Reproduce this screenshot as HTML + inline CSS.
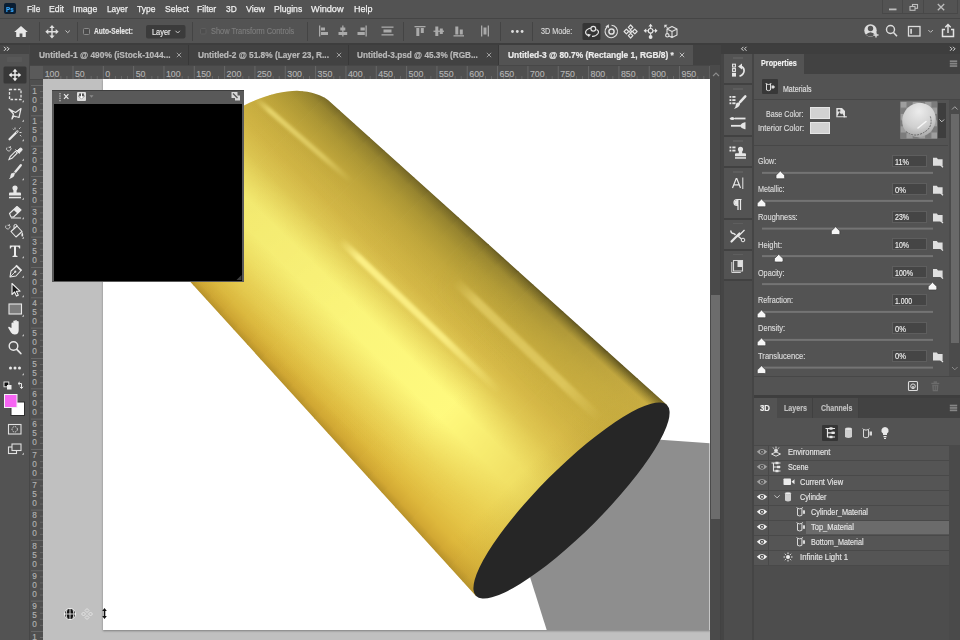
<!DOCTYPE html>
<html><head><meta charset="utf-8">
<style>
*{box-sizing:border-box;margin:0;padding:0}
html,body{width:960px;height:640px;overflow:hidden;background:#535353;font-family:"Liberation Sans",sans-serif;}
#app{position:relative;width:960px;height:640px;overflow:hidden;background:#535353;color:#dcdcdc}
.abs{position:absolute}
.t{position:absolute;white-space:nowrap;line-height:1;transform-origin:0 50%;-webkit-text-stroke:0.15px}
#canvas{left:43px;top:79px;width:667px;height:561px;background:#c0c0c0;overflow:hidden}
</style></head>
<body>
<div id="app">
<!-- menubar / options bar -->
<div class="abs" style="left:0px;top:0px;width:960px;height:18px;background:#535353;"></div>
<div class="abs" style="left:0px;top:17.5px;width:960px;height:1.5px;background:#454545;"></div>
<div class="abs" style="left:0px;top:19px;width:960px;height:24px;background:#535353;"></div>
<div class="abs" style="left:0px;top:43px;width:960px;height:2px;background:#3d3d3d;"></div>
<div class="abs" style="left:4.2px;top:3.2px;width:11.6px;height:10.8px;background:#0a1e33;border-radius:2px"></div>
<div class="t" style="left:6.2px;top:6px;font-size:8px;color:#35a9ff;font-weight:bold;transform:scaleX(0.777);">Ps</div>
<div class="t" style="-webkit-text-stroke:0.25px #f0f0f0;left:26.5px;top:4px;font-size:9.6px;color:#f0f0f0;transform:scaleX(0.857);">File</div>
<div class="t" style="-webkit-text-stroke:0.25px #f0f0f0;left:49px;top:4px;font-size:9.6px;color:#f0f0f0;transform:scaleX(0.907);">Edit</div>
<div class="t" style="-webkit-text-stroke:0.25px #f0f0f0;left:73px;top:4px;font-size:9.6px;color:#f0f0f0;transform:scaleX(0.909);">Image</div>
<div class="t" style="-webkit-text-stroke:0.25px #f0f0f0;left:107px;top:4px;font-size:9.6px;color:#f0f0f0;transform:scaleX(0.864);">Layer</div>
<div class="t" style="-webkit-text-stroke:0.25px #f0f0f0;left:137px;top:4px;font-size:9.6px;color:#f0f0f0;transform:scaleX(0.884);">Type</div>
<div class="t" style="-webkit-text-stroke:0.25px #f0f0f0;left:164.6px;top:4px;font-size:9.6px;color:#f0f0f0;transform:scaleX(0.892);">Select</div>
<div class="t" style="-webkit-text-stroke:0.25px #f0f0f0;left:197px;top:4px;font-size:9.6px;color:#f0f0f0;transform:scaleX(0.902);">Filter</div>
<div class="t" style="-webkit-text-stroke:0.25px #f0f0f0;left:225.6px;top:4px;font-size:9.6px;color:#f0f0f0;transform:scaleX(0.868);">3D</div>
<div class="t" style="-webkit-text-stroke:0.25px #f0f0f0;left:245.8px;top:4px;font-size:9.6px;color:#f0f0f0;transform:scaleX(0.921);">View</div>
<div class="t" style="-webkit-text-stroke:0.25px #f0f0f0;left:273.8px;top:4px;font-size:9.6px;color:#f0f0f0;transform:scaleX(0.896);">Plugins</div>
<div class="t" style="-webkit-text-stroke:0.25px #f0f0f0;left:311.2px;top:4px;font-size:9.6px;color:#f0f0f0;transform:scaleX(0.955);">Window</div>
<div class="t" style="-webkit-text-stroke:0.25px #f0f0f0;left:353.5px;top:4px;font-size:9.6px;color:#f0f0f0;transform:scaleX(0.937);">Help</div>
<div class="abs" style="left:882px;top:0px;width:21px;height:13.5px;background:transparent;border:1px solid #484848;border-top:0"></div>
<div class="abs" style="left:903px;top:0px;width:21px;height:13.5px;background:transparent;border:1px solid #484848;border-top:0;border-left:0"></div>
<div class="abs" style="left:924px;top:0px;width:34px;height:13.5px;background:transparent;border:1px solid #484848;border-top:0;border-left:0"></div>
<svg class="abs" style="left:882px;top:0" width="78" height="14" viewBox="882 0 78 14">
<rect x="889" y="8.500" width="7.500" height="1.800" fill="#bdbdbd"/>
<rect x="912.500" y="4.500" width="5" height="3.800" fill="none" stroke="#bdbdbd" stroke-width="1.100"/>
<rect x="910" y="6.500" width="5" height="3.800" fill="#535353" stroke="#bdbdbd" stroke-width="1.100"/>
<path d="M937.800,4 l6.400,6.200 M944.200,4 l-6.400,6.200" stroke="#bdbdbd" stroke-width="1.300"/>
</svg>
<!-- options bar -->
<svg class="abs" style="left:0;top:18px" width="960" height="26" viewBox="0 18 960 26">
<g stroke="#444" stroke-width="1"><path d="M39.500,22 v19 M77.500,22 v19 M192.500,22 v19 M307.500,22 v19 M403.500,22 v19 M500.500,22 v19 M532.500,22 v19"/></g>
<!-- home -->
<path d="M21,26 l-6.800,6 h2 v5 h3.400 v-3.400 h2.800 v3.400 h3.400 v-5 h2z" fill="#e8e8e8"/>
<!-- move -->
<g fill="#e0e0e0" stroke="none"><path d="M52,25 l2.600,3 h-1.900 v3 h3 v-1.900 l3,2.600 l-3,2.600 v-1.900 h-3 v3 h1.900 l-2.600,3 l-2.600,-3 h1.900 v-3 h-3 v1.900 l-3,-2.600 l3,-2.600 v1.900 h3 v-3 h-1.900z"/></g>
<path d="M65.500,30.500 l2.200,2.200 l2.200,-2.200" stroke="#c8c8c8" stroke-width="1" fill="none"/>
<!-- checkbox -->
<rect x="83.500" y="28.500" width="6" height="6" rx="1" fill="#4a4a4a" stroke="#8a8a8a" stroke-width="1"/>
<!-- dropdown -->
<rect x="146" y="25" width="39.500" height="13.500" rx="2" fill="#3b3b3b"/>
<path d="M175.500,30.800 l2.200,2.200 l2.200,-2.200" stroke="#c8c8c8" stroke-width="1" fill="none"/>
<!-- dim checkbox -->
<rect x="200.500" y="28.500" width="5.500" height="5.500" rx="1" fill="#4e4e4e" stroke="#5e5e5e" stroke-width="1"/>
<!-- align icons -->
<g fill="#aaa">
<rect x="319" y="25.500" width="1.300" height="11"/><rect x="321" y="27.500" width="4" height="3"/><rect x="321" y="32" width="7" height="3"/>
<rect x="342.200" y="25.500" width="1.300" height="11"/><rect x="340.300" y="27.500" width="5" height="3"/><rect x="338.500" y="32" width="8.700" height="3"/>
<rect x="365.500" y="25.500" width="1.300" height="11"/><rect x="360.500" y="27.500" width="4.300" height="3"/><rect x="357.500" y="32" width="7.300" height="3"/>
<rect x="381.500" y="26.500" width="12" height="1.300"/><rect x="383.500" y="29.500" width="8" height="3"/><rect x="381.500" y="34.200" width="12" height="1.300"/>
<rect x="414.500" y="26" width="11" height="1.300"/><rect x="416.300" y="28" width="3" height="8"/><rect x="420.800" y="28" width="3" height="5"/>
<rect x="433.500" y="30.600" width="10.500" height="1.300"/><rect x="435.300" y="26.500" width="3" height="9.500"/><rect x="439.800" y="28.500" width="3" height="5.500"/>
<rect x="453.500" y="35.200" width="10.500" height="1.300"/><rect x="455.300" y="26.500" width="3" height="8"/><rect x="459.800" y="29.500" width="3" height="5"/>
<rect x="481" y="25.500" width="1.300" height="11"/><rect x="483.500" y="27.500" width="3" height="7"/><rect x="487.700" y="25.500" width="1.300" height="11"/>
</g>
<g fill="#dedede"><circle cx="512.500" cy="31.500" r="1.400"/><circle cx="517.300" cy="31.500" r="1.400"/><circle cx="522.100" cy="31.500" r="1.400"/></g>
<!-- 3D mode icons -->
<rect x="582.500" y="23" width="18" height="17" rx="1.500" fill="#353535"/>
<g fill="none" stroke="#e4e4e4" stroke-width="1.200">
<path d="M596.500,29.500 q3,1.500 1.500,4 q-2,3 -6,2.800 M589,35.600 q-4,-1.200 -3.300,-4 q1,-2.800 5.500,-3.600"/><circle cx="593.300" cy="28.800" r="2.400" fill="#353535"/>
</g><path d="M587.300,33.800 l3.600,0.600 l-2.200,2.800z" fill="#e4e4e4"/>
<g fill="none" stroke="#e0e0e0" stroke-width="1.100">
<circle cx="611.500" cy="31.500" r="2.600" stroke-width="1.500"/><path d="M607,27 a6.200,6.200 0 1 0 4.500,-1.700"/></g><path d="M608.800,24.300 l-3.400,2.300 l3.600,1.500z" fill="#e0e0e0"/>
<g fill="none" stroke="#e4e4e4" stroke-width="1.200" stroke-linejoin="round"><path d="M630.600,25 l2.300,2.300 l-2.300,2.300 l-2.300,-2.300z M630.600,33.400 l2.300,2.300 l-2.300,2.300 l-2.300,-2.300z M624.100,31.500 l2.300,-2.300 l2.300,2.300 l-2.300,2.300z M632.500,31.500 l2.300,-2.300 l2.300,2.300 l-2.300,2.300z"/><circle cx="630.600" cy="31.500" r="1" /></g>
<g fill="#e6e6e6"><path d="M650.600,23.800 l2.200,2.600 h-4.400z M643.600,30.800 l2.600,-2.200 v4.400z M657.600,30.800 l-2.600,-2.200 v4.400z"/><circle cx="650.600" cy="37" r="1.900"/><rect x="650.100" y="26" width="1" height="2.500"/><rect x="646" y="30.300" width="2.300" height="1"/><rect x="653" y="30.300" width="2.300" height="1"/><rect x="650.100" y="33" width="1" height="2.500"/></g><circle cx="650.600" cy="30.800" r="2.300" fill="none" stroke="#e6e6e6" stroke-width="1.100"/>
<g fill="none" stroke="#e0e0e0" stroke-width="1.100" stroke-linejoin="round"><path d="M667,29 l5,-2.600 l5,2.600 v6 l-5,2.600 l-5,-2.600z M667,29 l5,2.600 l5,-2.600 M672,31.600 v6"/><circle cx="667.300" cy="35.300" r="1.700" fill="#535353"/></g><path d="M664.300,24.800 h3.200 l-3.200,3.200z" fill="#e0e0e0"/><path d="M665.500,26 l2.500,2.500" stroke="#e0e0e0" stroke-width="1"/>
<!-- right icons -->
<circle cx="870.500" cy="30.500" r="6.200" fill="#dcdcdc"/><circle cx="870.500" cy="28.500" r="2.700" fill="#535353"/><path d="M865.800,34.800 q4.700,-5 9.400,0 q-4.700,3.500 -9.400,0z" fill="#535353"/><path d="M876,32.500 v5 M873.500,35 h5" stroke="#dcdcdc" stroke-width="1.400"/>
<circle cx="890.500" cy="29.500" r="4" fill="none" stroke="#dcdcdc" stroke-width="1.400"/><path d="M893.500,32.500 l3.500,3.700" stroke="#dcdcdc" stroke-width="1.600"/>
<rect x="908.500" y="26.500" width="11.500" height="9.500" fill="none" stroke="#dcdcdc" stroke-width="1.300"/><rect x="910.300" y="28.800" width="1.600" height="5" fill="#dcdcdc"/>
<path d="M928.300,30 l2.300,2.300 l2.300,-2.300" stroke="#bdbdbd" stroke-width="1" fill="none"/>
<path d="M945,29.500 h-2.500 v7 h11 v-7 h-2.500" fill="none" stroke="#e4e4e4" stroke-width="1.500"/><path d="M948,33 v-7.500 M945.300,27.300 l2.700,-2.800 l2.700,2.800" fill="none" stroke="#e4e4e4" stroke-width="1.400"/>
</svg>
<div class="t" style="left:94px;top:27px;font-size:8.5px;color:#e6e6e6;font-weight:bold;transform:scaleX(0.779);">Auto-Select:</div>
<div class="t" style="left:151.5px;top:28px;font-size:8.8px;color:#ececec;transform:scaleX(0.840);">Layer</div>
<div class="t" style="left:210.5px;top:27px;font-size:8.6px;color:#7d7d7d;transform:scaleX(0.859);">Show Transform Controls</div>
<div class="t" style="left:540.6px;top:28px;font-size:8.2px;color:#d8d8d8;transform:scaleX(0.883);">3D Mode:</div>
<!-- doc tabs -->
<div class="abs" style="left:30px;top:45px;width:691px;height:20px;background:#424242;"></div>
<div class="abs" style="left:498.5px;top:45px;width:194px;height:20px;background:#535353;"></div>
<div class="abs" style="left:187.5px;top:45px;width:1px;height:20px;background:#383838;"></div>
<div class="abs" style="left:347.5px;top:45px;width:1px;height:20px;background:#383838;"></div>
<div class="abs" style="left:497.5px;top:45px;width:1px;height:20px;background:#383838;"></div>
<div class="t" style="-webkit-text-stroke:0.2px;left:38.7px;top:51px;font-size:8.6px;color:#b9b9b9;font-weight:bold;transform:scaleX(0.975);">Untitled-1 @ 490% (iStock-1044...</div>
<svg class="abs" style="left:175.5px;top:52.2px" width="6" height="6" viewBox="0 0 6 6"><path d="M0.800,0.800 L5.200,5.200 M5.200,0.800 L0.800,5.200" stroke="#a8a8a8" stroke-width="0.900"/></svg>
<div class="t" style="-webkit-text-stroke:0.2px;left:197.5px;top:51px;font-size:8.6px;color:#b9b9b9;font-weight:bold;transform:scaleX(0.967);">Untitled-2 @ 51.8% (Layer 23, R...</div>
<svg class="abs" style="left:336px;top:52.2px" width="6" height="6" viewBox="0 0 6 6"><path d="M0.800,0.800 L5.200,5.200 M5.200,0.800 L0.800,5.200" stroke="#a8a8a8" stroke-width="0.900"/></svg>
<div class="t" style="-webkit-text-stroke:0.2px;left:357px;top:51px;font-size:8.6px;color:#b9b9b9;font-weight:bold;transform:scaleX(0.957);">Untitled-3.psd @ 45.3% (RGB...</div>
<svg class="abs" style="left:486px;top:52.2px" width="6" height="6" viewBox="0 0 6 6"><path d="M0.800,0.800 L5.200,5.200 M5.200,0.800 L0.800,5.200" stroke="#a8a8a8" stroke-width="0.900"/></svg>
<div class="t" style="-webkit-text-stroke:0.2px;left:507.5px;top:51px;font-size:8.6px;color:#ececec;font-weight:bold;transform:scaleX(0.974);">Untitled-3 @ 80.7% (Rectangle 1, RGB/8) *</div>
<svg class="abs" style="left:678.5px;top:52.2px" width="6" height="6" viewBox="0 0 6 6"><path d="M0.800,0.800 L5.200,5.200 M5.200,0.800 L0.800,5.200" stroke="#c8c8c8" stroke-width="0.900"/></svg>
<!-- rulers -->
<div class="abs" style="left:30px;top:65px;width:680px;height:14px;background:#4f4f4f;"></div>
<div class="abs" style="left:30px;top:65px;width:13px;height:14px;background:#5a5a5a;"></div>
<div class="abs" style="left:30px;top:79px;width:13px;height:561px;background:#4f4f4f;"></div>
<svg class="abs" style="left:30px;top:65px" width="680" height="575" viewBox="30 65 680 575"><g stroke="#6e6e6e" stroke-width="0.800"><path d="M48.71,76 v3"/><path d="M54.77,76 v3"/><path d="M60.84,76 v3"/><path d="M66.9,76 v3"/><path d="M72.97,66 v13"/><path d="M79.04,76 v3"/><path d="M85.1,76 v3"/><path d="M91.17,76 v3"/><path d="M97.23,76 v3"/><path d="M103.3,66 v13"/><path d="M109.37,76 v3"/><path d="M115.43,76 v3"/><path d="M121.5,76 v3"/><path d="M127.56,76 v3"/><path d="M133.63,66 v13"/><path d="M139.7,76 v3"/><path d="M145.76,76 v3"/><path d="M151.83,76 v3"/><path d="M157.89,76 v3"/><path d="M163.96,66 v13"/><path d="M170.03,76 v3"/><path d="M176.09,76 v3"/><path d="M182.16,76 v3"/><path d="M188.22,76 v3"/><path d="M194.29,66 v13"/><path d="M200.36,76 v3"/><path d="M206.42,76 v3"/><path d="M212.49,76 v3"/><path d="M218.55,76 v3"/><path d="M224.62,66 v13"/><path d="M230.69,76 v3"/><path d="M236.75,76 v3"/><path d="M242.82,76 v3"/><path d="M248.88,76 v3"/><path d="M254.95,66 v13"/><path d="M261.02,76 v3"/><path d="M267.08,76 v3"/><path d="M273.15,76 v3"/><path d="M279.21,76 v3"/><path d="M285.28,66 v13"/><path d="M291.35,76 v3"/><path d="M297.41,76 v3"/><path d="M303.48,76 v3"/><path d="M309.54,76 v3"/><path d="M315.61,66 v13"/><path d="M321.68,76 v3"/><path d="M327.74,76 v3"/><path d="M333.81,76 v3"/><path d="M339.87,76 v3"/><path d="M345.94,66 v13"/><path d="M352.01,76 v3"/><path d="M358.07,76 v3"/><path d="M364.14,76 v3"/><path d="M370.2,76 v3"/><path d="M376.27,66 v13"/><path d="M382.34,76 v3"/><path d="M388.4,76 v3"/><path d="M394.47,76 v3"/><path d="M400.53,76 v3"/><path d="M406.6,66 v13"/><path d="M412.67,76 v3"/><path d="M418.73,76 v3"/><path d="M424.8,76 v3"/><path d="M430.86,76 v3"/><path d="M436.93,66 v13"/><path d="M443,76 v3"/><path d="M449.06,76 v3"/><path d="M455.13,76 v3"/><path d="M461.19,76 v3"/><path d="M467.26,66 v13"/><path d="M473.33,76 v3"/><path d="M479.39,76 v3"/><path d="M485.46,76 v3"/><path d="M491.52,76 v3"/><path d="M497.59,66 v13"/><path d="M503.66,76 v3"/><path d="M509.72,76 v3"/><path d="M515.79,76 v3"/><path d="M521.85,76 v3"/><path d="M527.92,66 v13"/><path d="M533.99,76 v3"/><path d="M540.05,76 v3"/><path d="M546.12,76 v3"/><path d="M552.18,76 v3"/><path d="M558.25,66 v13"/><path d="M564.32,76 v3"/><path d="M570.38,76 v3"/><path d="M576.45,76 v3"/><path d="M582.51,76 v3"/><path d="M588.58,66 v13"/><path d="M594.65,76 v3"/><path d="M600.71,76 v3"/><path d="M606.78,76 v3"/><path d="M612.84,76 v3"/><path d="M618.91,66 v13"/><path d="M624.98,76 v3"/><path d="M631.04,76 v3"/><path d="M637.11,76 v3"/><path d="M643.17,76 v3"/><path d="M649.24,66 v13"/><path d="M655.31,76 v3"/><path d="M661.37,76 v3"/><path d="M667.44,76 v3"/><path d="M673.5,76 v3"/><path d="M679.57,66 v13"/><path d="M685.64,76 v3"/><path d="M691.7,76 v3"/><path d="M697.77,76 v3"/><path d="M703.83,76 v3"/><path d="M709.9,66 v13"/><path d="M40,79.43 h3"/><path d="M31,85.5 h12"/><path d="M40,91.57 h3"/><path d="M40,97.63 h3"/><path d="M40,103.7 h3"/><path d="M40,109.76 h3"/><path d="M31,115.83 h12"/><path d="M40,121.9 h3"/><path d="M40,127.96 h3"/><path d="M40,134.03 h3"/><path d="M40,140.09 h3"/><path d="M31,146.16 h12"/><path d="M40,152.23 h3"/><path d="M40,158.29 h3"/><path d="M40,164.36 h3"/><path d="M40,170.42 h3"/><path d="M31,176.49 h12"/><path d="M40,182.56 h3"/><path d="M40,188.62 h3"/><path d="M40,194.69 h3"/><path d="M40,200.75 h3"/><path d="M31,206.82 h12"/><path d="M40,212.89 h3"/><path d="M40,218.95 h3"/><path d="M40,225.02 h3"/><path d="M40,231.08 h3"/><path d="M31,237.15 h12"/><path d="M40,243.22 h3"/><path d="M40,249.28 h3"/><path d="M40,255.35 h3"/><path d="M40,261.41 h3"/><path d="M31,267.48 h12"/><path d="M40,273.55 h3"/><path d="M40,279.61 h3"/><path d="M40,285.68 h3"/><path d="M40,291.74 h3"/><path d="M31,297.81 h12"/><path d="M40,303.88 h3"/><path d="M40,309.94 h3"/><path d="M40,316.01 h3"/><path d="M40,322.07 h3"/><path d="M31,328.14 h12"/><path d="M40,334.21 h3"/><path d="M40,340.27 h3"/><path d="M40,346.34 h3"/><path d="M40,352.4 h3"/><path d="M31,358.47 h12"/><path d="M40,364.54 h3"/><path d="M40,370.6 h3"/><path d="M40,376.67 h3"/><path d="M40,382.73 h3"/><path d="M31,388.8 h12"/><path d="M40,394.87 h3"/><path d="M40,400.93 h3"/><path d="M40,407 h3"/><path d="M40,413.06 h3"/><path d="M31,419.13 h12"/><path d="M40,425.2 h3"/><path d="M40,431.26 h3"/><path d="M40,437.33 h3"/><path d="M40,443.39 h3"/><path d="M31,449.46 h12"/><path d="M40,455.53 h3"/><path d="M40,461.59 h3"/><path d="M40,467.66 h3"/><path d="M40,473.72 h3"/><path d="M31,479.79 h12"/><path d="M40,485.86 h3"/><path d="M40,491.92 h3"/><path d="M40,497.99 h3"/><path d="M40,504.05 h3"/><path d="M31,510.12 h12"/><path d="M40,516.19 h3"/><path d="M40,522.25 h3"/><path d="M40,528.32 h3"/><path d="M40,534.38 h3"/><path d="M31,540.45 h12"/><path d="M40,546.52 h3"/><path d="M40,552.58 h3"/><path d="M40,558.65 h3"/><path d="M40,564.71 h3"/><path d="M31,570.78 h12"/><path d="M40,576.85 h3"/><path d="M40,582.91 h3"/><path d="M40,588.98 h3"/><path d="M40,595.04 h3"/><path d="M31,601.11 h12"/><path d="M40,607.18 h3"/><path d="M40,613.24 h3"/><path d="M40,619.31 h3"/><path d="M40,625.37 h3"/><path d="M31,631.44 h12"/><path d="M40,637.51 h3"/></g></svg>
<div class="t" style="left:44.64px;top:70px;font-size:8.8px;color:#b2b2b2;">100</div>
<div class="t" style="left:74.97px;top:70px;font-size:8.8px;color:#b2b2b2;">50</div>
<div class="t" style="left:105.3px;top:70px;font-size:8.8px;color:#b2b2b2;">0</div>
<div class="t" style="left:135.63px;top:70px;font-size:8.8px;color:#b2b2b2;">50</div>
<div class="t" style="left:165.96px;top:70px;font-size:8.8px;color:#b2b2b2;">100</div>
<div class="t" style="left:196.29px;top:70px;font-size:8.8px;color:#b2b2b2;">150</div>
<div class="t" style="left:226.62px;top:70px;font-size:8.8px;color:#b2b2b2;">200</div>
<div class="t" style="left:256.95px;top:70px;font-size:8.8px;color:#b2b2b2;">250</div>
<div class="t" style="left:287.28px;top:70px;font-size:8.8px;color:#b2b2b2;">300</div>
<div class="t" style="left:317.61px;top:70px;font-size:8.8px;color:#b2b2b2;">350</div>
<div class="t" style="left:347.94px;top:70px;font-size:8.8px;color:#b2b2b2;">400</div>
<div class="t" style="left:378.27px;top:70px;font-size:8.8px;color:#b2b2b2;">450</div>
<div class="t" style="left:408.6px;top:70px;font-size:8.8px;color:#b2b2b2;">500</div>
<div class="t" style="left:438.93px;top:70px;font-size:8.8px;color:#b2b2b2;">550</div>
<div class="t" style="left:469.26px;top:70px;font-size:8.8px;color:#b2b2b2;">600</div>
<div class="t" style="left:499.59px;top:70px;font-size:8.8px;color:#b2b2b2;">650</div>
<div class="t" style="left:529.92px;top:70px;font-size:8.8px;color:#b2b2b2;">700</div>
<div class="t" style="left:560.25px;top:70px;font-size:8.8px;color:#b2b2b2;">750</div>
<div class="t" style="left:590.58px;top:70px;font-size:8.8px;color:#b2b2b2;">800</div>
<div class="t" style="left:620.91px;top:70px;font-size:8.8px;color:#b2b2b2;">850</div>
<div class="t" style="left:651.24px;top:70px;font-size:8.8px;color:#b2b2b2;">900</div>
<div class="t" style="left:681.57px;top:70px;font-size:8.8px;color:#b2b2b2;">950</div>
<div class="t" style="left:32.2px;top:88px;font-size:8.2px;color:#b2b2b2;">1</div>
<div class="t" style="left:32.2px;top:97px;font-size:8.2px;color:#b2b2b2;">0</div>
<div class="t" style="left:32.2px;top:106px;font-size:8.2px;color:#b2b2b2;">0</div>
<div class="t" style="left:32.2px;top:118px;font-size:8.2px;color:#b2b2b2;">1</div>
<div class="t" style="left:32.2px;top:127px;font-size:8.2px;color:#b2b2b2;">5</div>
<div class="t" style="left:32.2px;top:136px;font-size:8.2px;color:#b2b2b2;">0</div>
<div class="t" style="left:32.2px;top:148px;font-size:8.2px;color:#b2b2b2;">2</div>
<div class="t" style="left:32.2px;top:157px;font-size:8.2px;color:#b2b2b2;">0</div>
<div class="t" style="left:32.2px;top:166px;font-size:8.2px;color:#b2b2b2;">0</div>
<div class="t" style="left:32.2px;top:179px;font-size:8.2px;color:#b2b2b2;">2</div>
<div class="t" style="left:32.2px;top:188px;font-size:8.2px;color:#b2b2b2;">5</div>
<div class="t" style="left:32.2px;top:197px;font-size:8.2px;color:#b2b2b2;">0</div>
<div class="t" style="left:32.2px;top:209px;font-size:8.2px;color:#b2b2b2;">3</div>
<div class="t" style="left:32.2px;top:218px;font-size:8.2px;color:#b2b2b2;">0</div>
<div class="t" style="left:32.2px;top:227px;font-size:8.2px;color:#b2b2b2;">0</div>
<div class="t" style="left:32.2px;top:239px;font-size:8.2px;color:#b2b2b2;">3</div>
<div class="t" style="left:32.2px;top:248px;font-size:8.2px;color:#b2b2b2;">5</div>
<div class="t" style="left:32.2px;top:257px;font-size:8.2px;color:#b2b2b2;">0</div>
<div class="t" style="left:32.2px;top:270px;font-size:8.2px;color:#b2b2b2;">4</div>
<div class="t" style="left:32.2px;top:279px;font-size:8.2px;color:#b2b2b2;">0</div>
<div class="t" style="left:32.2px;top:288px;font-size:8.2px;color:#b2b2b2;">0</div>
<div class="t" style="left:32.2px;top:300px;font-size:8.2px;color:#b2b2b2;">4</div>
<div class="t" style="left:32.2px;top:309px;font-size:8.2px;color:#b2b2b2;">5</div>
<div class="t" style="left:32.2px;top:318px;font-size:8.2px;color:#b2b2b2;">0</div>
<div class="t" style="left:32.2px;top:330px;font-size:8.2px;color:#b2b2b2;">5</div>
<div class="t" style="left:32.2px;top:339px;font-size:8.2px;color:#b2b2b2;">0</div>
<div class="t" style="left:32.2px;top:348px;font-size:8.2px;color:#b2b2b2;">0</div>
<div class="t" style="left:32.2px;top:361px;font-size:8.2px;color:#b2b2b2;">5</div>
<div class="t" style="left:32.2px;top:370px;font-size:8.2px;color:#b2b2b2;">5</div>
<div class="t" style="left:32.2px;top:379px;font-size:8.2px;color:#b2b2b2;">0</div>
<div class="t" style="left:32.2px;top:391px;font-size:8.2px;color:#b2b2b2;">6</div>
<div class="t" style="left:32.2px;top:400px;font-size:8.2px;color:#b2b2b2;">0</div>
<div class="t" style="left:32.2px;top:409px;font-size:8.2px;color:#b2b2b2;">0</div>
<div class="t" style="left:32.2px;top:421px;font-size:8.2px;color:#b2b2b2;">6</div>
<div class="t" style="left:32.2px;top:430px;font-size:8.2px;color:#b2b2b2;">5</div>
<div class="t" style="left:32.2px;top:439px;font-size:8.2px;color:#b2b2b2;">0</div>
<div class="t" style="left:32.2px;top:452px;font-size:8.2px;color:#b2b2b2;">7</div>
<div class="t" style="left:32.2px;top:461px;font-size:8.2px;color:#b2b2b2;">0</div>
<div class="t" style="left:32.2px;top:470px;font-size:8.2px;color:#b2b2b2;">0</div>
<div class="t" style="left:32.2px;top:482px;font-size:8.2px;color:#b2b2b2;">7</div>
<div class="t" style="left:32.2px;top:491px;font-size:8.2px;color:#b2b2b2;">5</div>
<div class="t" style="left:32.2px;top:500px;font-size:8.2px;color:#b2b2b2;">0</div>
<div class="t" style="left:32.2px;top:512px;font-size:8.2px;color:#b2b2b2;">8</div>
<div class="t" style="left:32.2px;top:521px;font-size:8.2px;color:#b2b2b2;">0</div>
<div class="t" style="left:32.2px;top:530px;font-size:8.2px;color:#b2b2b2;">0</div>
<div class="t" style="left:32.2px;top:543px;font-size:8.2px;color:#b2b2b2;">8</div>
<div class="t" style="left:32.2px;top:552px;font-size:8.2px;color:#b2b2b2;">5</div>
<div class="t" style="left:32.2px;top:561px;font-size:8.2px;color:#b2b2b2;">0</div>
<div class="t" style="left:32.2px;top:573px;font-size:8.2px;color:#b2b2b2;">9</div>
<div class="t" style="left:32.2px;top:582px;font-size:8.2px;color:#b2b2b2;">0</div>
<div class="t" style="left:32.2px;top:591px;font-size:8.2px;color:#b2b2b2;">0</div>
<div class="t" style="left:32.2px;top:603px;font-size:8.2px;color:#b2b2b2;">9</div>
<div class="t" style="left:32.2px;top:612px;font-size:8.2px;color:#b2b2b2;">5</div>
<div class="t" style="left:32.2px;top:621px;font-size:8.2px;color:#b2b2b2;">0</div>
<div class="t" style="left:32.2px;top:634px;font-size:8.2px;color:#b2b2b2;">1</div>
<div class="abs" style="left:30px;top:64.5px;width:691px;height:0.8px;background:#474747;"></div>
<div class="abs" style="left:42.6px;top:79px;width:0.8px;height:561px;background:#474747;"></div>
<div class="abs" style="left:30px;top:78.6px;width:680px;height:0.8px;background:#474747;"></div>
<!-- canvas -->
<div id="canvas" class="abs">
<div class="abs" style="left:60px;top:0;width:607px;height:551px;background:#fff;box-shadow:0 1px 2px rgba(0,0,0,.35)"></div>
<svg class="abs" style="left:0;top:0" width="667" height="561" viewBox="43 79 667 561">
<defs>
<clipPath id="cv"><rect x="103" y="79" width="606.500" height="551"/></clipPath>
<clipPath id="body"><path d="M667,405 L328,99.900 C322,95.500 312,91.500 297,90.800 C282,90.800 262,96 243,106 L40,106 L40,117 L190,281.500 L476,596 Z"/></clipPath>
<linearGradient id="gold" gradientUnits="userSpaceOnUse" x1="667" y1="405" x2="476" y2="596">
<stop offset="0" stop-color="#5e5320"/><stop offset="0.015" stop-color="#776927"/><stop offset="0.05" stop-color="#96842f"/><stop offset="0.11" stop-color="#ae9835"/><stop offset="0.19" stop-color="#c2a83c"/><stop offset="0.27" stop-color="#ceb242"/><stop offset="0.35" stop-color="#d6b846"/><stop offset="0.45" stop-color="#dcc04a"/><stop offset="0.6" stop-color="#e4c84e"/><stop offset="0.75" stop-color="#e6c84a"/><stop offset="0.85" stop-color="#e4c244"/><stop offset="0.92" stop-color="#deb83c"/><stop offset="0.97" stop-color="#d2a833"/><stop offset="1" stop-color="#b8922a"/>
</linearGradient>
<linearGradient id="g0" href="#gold" x1="659.56" y1="398.3" x2="469.3" y2="588.56"/><linearGradient id="g1" href="#gold" x1="644.76" y1="384.81" x2="455.81" y2="573.76"/><linearGradient id="g2" href="#gold" x1="629.96" y1="371.33" x2="442.33" y2="558.96"/><linearGradient id="g3" href="#gold" x1="615.16" y1="357.84" x2="428.84" y2="544.16"/><linearGradient id="g4" href="#gold" x1="600.36" y1="344.36" x2="415.36" y2="529.36"/><linearGradient id="g5" href="#gold" x1="585.56" y1="330.88" x2="401.88" y2="514.56"/><linearGradient id="g6" href="#gold" x1="570.76" y1="317.39" x2="388.39" y2="499.76"/><linearGradient id="g7" href="#gold" x1="555.96" y1="303.91" x2="374.91" y2="484.96"/><linearGradient id="g8" href="#gold" x1="541.16" y1="290.42" x2="361.42" y2="470.16"/><linearGradient id="g9" href="#gold" x1="526.36" y1="276.94" x2="347.94" y2="455.36"/><linearGradient id="g10" href="#gold" x1="511.56" y1="263.45" x2="334.45" y2="440.56"/><linearGradient id="g11" href="#gold" x1="496.76" y1="249.97" x2="320.97" y2="425.76"/><linearGradient id="g12" href="#gold" x1="481.96" y1="236.48" x2="307.48" y2="410.96"/><linearGradient id="g13" href="#gold" x1="467.16" y1="223" x2="294" y2="396.16"/><linearGradient id="g14" href="#gold" x1="452.36" y1="209.51" x2="280.51" y2="381.36"/><linearGradient id="g15" href="#gold" x1="437.56" y1="196.03" x2="267.03" y2="366.56"/><linearGradient id="g16" href="#gold" x1="422.76" y1="182.55" x2="253.55" y2="351.76"/><linearGradient id="g17" href="#gold" x1="407.96" y1="169.06" x2="240.06" y2="336.96"/><linearGradient id="g18" href="#gold" x1="393.16" y1="155.58" x2="226.58" y2="322.16"/><linearGradient id="g19" href="#gold" x1="378.36" y1="142.09" x2="213.09" y2="307.36"/><linearGradient id="g20" href="#gold" x1="363.56" y1="128.61" x2="199.61" y2="292.56"/><linearGradient id="g21" href="#gold" x1="348.76" y1="115.12" x2="186.12" y2="277.76"/><linearGradient id="g22" href="#gold" x1="333.97" y1="101.64" x2="172.64" y2="262.97"/><linearGradient id="g23" href="#gold" x1="319.17" y1="88.15" x2="159.15" y2="248.17"/><linearGradient id="g24" href="#gold" x1="304.37" y1="74.67" x2="145.67" y2="233.37"/><linearGradient id="g25" href="#gold" x1="289.57" y1="61.19" x2="132.19" y2="218.57"/><linearGradient id="g26" href="#gold" x1="274.77" y1="47.7" x2="118.7" y2="203.77"/><linearGradient id="g27" href="#gold" x1="259.97" y1="34.22" x2="105.22" y2="188.97"/>
<linearGradient id="band" gradientUnits="userSpaceOnUse" x1="414.68" y1="252.23" x2="291.32" y2="377.77"><stop offset="0" stop-color="#fffa7e" stop-opacity="0"/><stop offset="0.14" stop-color="#fffa7e" stop-opacity="0.04"/><stop offset="0.26" stop-color="#fffa7e" stop-opacity="0.25"/><stop offset="0.36" stop-color="#fffa7e" stop-opacity="0.65"/><stop offset="0.45" stop-color="#fffa7e" stop-opacity="1"/><stop offset="0.57" stop-color="#fffa7e" stop-opacity="1"/><stop offset="0.67" stop-color="#fffa7e" stop-opacity="0.7"/><stop offset="0.78" stop-color="#fffa7e" stop-opacity="0.35"/><stop offset="0.9" stop-color="#fffa7e" stop-opacity="0.1"/><stop offset="1" stop-color="#fffa7e" stop-opacity="0"/></linearGradient>
<linearGradient id="bandm" gradientUnits="userSpaceOnUse" x1="159.4" y1="124.89" x2="558.85" y2="517.4"><stop offset="0" stop-color="rgb(191,191,191)"/><stop offset="0.2" stop-color="rgb(216,216,216)"/><stop offset="0.5" stop-color="rgb(255,255,255)"/><stop offset="0.72" stop-color="rgb(255,255,255)"/><stop offset="0.82" stop-color="rgb(178,178,178)"/><stop offset="0.92" stop-color="rgb(102,102,102)"/><stop offset="1" stop-color="rgb(63,63,63)"/></linearGradient>
<mask id="bm" maskUnits="userSpaceOnUse" x="43" y="79" width="667" height="561"><rect x="43" y="79" width="667" height="561" fill="url(#bandm)"/></mask>
<linearGradient id="far" gradientUnits="userSpaceOnUse" x1="250" y1="180" x2="571" y2="500">
<stop offset="0" stop-color="#a08c30" stop-opacity="0.10"/><stop offset="0.5" stop-color="#a08c30" stop-opacity="0.03"/><stop offset="0.7" stop-color="#a08c30" stop-opacity="0"/>
<stop offset="0.88" stop-color="#b09432" stop-opacity="0"/><stop offset="1" stop-color="#b09432" stop-opacity="0.30"/>
</linearGradient>
<linearGradient id="stA" gradientUnits="userSpaceOnUse" x1="255" y1="98" x2="352" y2="182">
<stop offset="0" stop-color="#f2e27a" stop-opacity="0"/><stop offset="0.15" stop-color="#f2e27a" stop-opacity="0.75"/><stop offset="0.7" stop-color="#f2e27a" stop-opacity="0.55"/><stop offset="1" stop-color="#f2e27a" stop-opacity="0"/>
</linearGradient>
<linearGradient id="stB" gradientUnits="userSpaceOnUse" x1="455" y1="281" x2="600" y2="419">
<stop offset="0" stop-color="#ecd870" stop-opacity="0"/><stop offset="0.15" stop-color="#ecd870" stop-opacity="0.6"/><stop offset="0.75" stop-color="#ecd870" stop-opacity="0.55"/><stop offset="1" stop-color="#ecd870" stop-opacity="0"/>
</linearGradient>
<linearGradient id="stM" gradientUnits="userSpaceOnUse" x1="340" y1="240" x2="500" y2="392">
<stop offset="0" stop-color="#fff48a" stop-opacity="0"/><stop offset="0.12" stop-color="#fff48a" stop-opacity="0.9"/><stop offset="0.65" stop-color="#fff48a" stop-opacity="0.8"/><stop offset="1" stop-color="#fff48a" stop-opacity="0"/>
</linearGradient>
<linearGradient id="nl" gradientUnits="userSpaceOnUse" x1="667" y1="405" x2="613.500" y2="464.500">
<stop offset="0" stop-color="#d8ba48" stop-opacity="0"/><stop offset="0.05" stop-color="#d8ba48" stop-opacity="0.1"/><stop offset="0.16" stop-color="#d8ba48" stop-opacity="0.8"/><stop offset="0.45" stop-color="#d8ba48" stop-opacity="0.6"/><stop offset="1" stop-color="#d8ba48" stop-opacity="0"/>
</linearGradient>
<linearGradient id="nlm" gradientUnits="userSpaceOnUse" x1="667" y1="405" x2="474" y2="231">
<stop offset="0" stop-color="#fff"/><stop offset="0.25" stop-color="#ccc"/><stop offset="0.6" stop-color="#555"/><stop offset="1" stop-color="#000"/>
</linearGradient>
<mask id="nm" maskUnits="userSpaceOnUse" x="43" y="79" width="667" height="561"><rect x="43" y="79" width="667" height="561" fill="url(#nlm)"/></mask>
<filter id="bl" x="-20%" y="-20%" width="140%" height="140%"><feGaussianBlur stdDeviation="1.600"/></filter>
</defs>
<g clip-path="url(#cv)">
<polygon points="660.400,439.800 710,443.200 710,631 547,631 530,577" fill="#8e8e8e"/>
<g clip-path="url(#body)">
<polygon points="755.35,373.22 712.92,330.79 401.79,641.92 444.22,684.35" fill="url(#g0)"/><polygon points="713.42,331.29 698.78,316.65 387.65,627.78 402.29,642.42" fill="url(#g1)"/><polygon points="699.27,317.15 684.64,302.51 373.51,613.64 388.15,628.27" fill="url(#g2)"/><polygon points="685.13,303.01 670.49,288.37 359.37,599.49 374.01,614.13" fill="url(#g3)"/><polygon points="670.99,288.86 656.35,274.23 345.23,585.35 359.86,599.99" fill="url(#g4)"/><polygon points="656.85,274.72 642.21,260.08 331.08,571.21 345.72,585.85" fill="url(#g5)"/><polygon points="642.71,260.58 628.07,245.94 316.94,557.07 331.58,571.71" fill="url(#g6)"/><polygon points="628.56,246.44 613.93,231.8 302.8,542.93 317.44,557.56" fill="url(#g7)"/><polygon points="614.42,232.29 599.78,217.66 288.66,528.78 303.29,543.42" fill="url(#g8)"/><polygon points="600.28,218.15 585.64,203.52 274.52,514.64 289.15,529.28" fill="url(#g9)"/><polygon points="586.14,204.01 571.5,189.37 260.37,500.5 275.01,515.14" fill="url(#g10)"/><polygon points="571.99,189.87 557.36,175.23 246.23,486.36 260.87,500.99" fill="url(#g11)"/><polygon points="557.85,175.73 543.22,161.09 232.09,472.22 246.73,486.85" fill="url(#g12)"/><polygon points="543.71,161.58 529.07,146.95 217.95,458.07 232.58,472.71" fill="url(#g13)"/><polygon points="529.57,147.44 514.93,132.8 203.8,443.93 218.44,458.57" fill="url(#g14)"/><polygon points="515.43,133.3 500.79,118.66 189.66,429.79 204.3,444.43" fill="url(#g15)"/><polygon points="501.28,119.16 486.65,104.52 175.52,415.65 190.16,430.28" fill="url(#g16)"/><polygon points="487.14,105.02 472.51,90.38 161.38,401.51 176.02,416.14" fill="url(#g17)"/><polygon points="473,90.87 458.36,76.24 147.24,387.36 161.87,402" fill="url(#g18)"/><polygon points="458.86,76.73 444.22,62.09 133.09,373.22 147.73,387.86" fill="url(#g19)"/><polygon points="444.72,62.59 430.08,47.95 118.95,359.08 133.59,373.72" fill="url(#g20)"/><polygon points="430.57,48.45 415.94,33.81 104.81,344.94 119.45,359.57" fill="url(#g21)"/><polygon points="416.43,34.3 401.79,19.67 90.67,330.79 105.3,345.43" fill="url(#g22)"/><polygon points="402.29,20.16 387.65,5.53 76.53,316.65 91.16,331.29" fill="url(#g23)"/><polygon points="388.15,6.02 373.51,-8.62 62.38,302.51 77.02,317.15" fill="url(#g24)"/><polygon points="374.01,-8.12 359.37,-22.76 48.24,288.37 62.88,303.01" fill="url(#g25)"/><polygon points="359.86,-22.26 345.23,-36.9 34.1,274.23 48.74,288.86" fill="url(#g26)"/><polygon points="345.72,-36.41 189.66,-192.46 -121.46,118.66 34.59,274.72" fill="url(#g27)"/>
<rect x="103" y="79" width="607" height="551" fill="url(#band)" mask="url(#bm)"/>
<rect x="103" y="79" width="607" height="551" fill="url(#far)"/>
<rect x="103" y="79" width="607" height="551" fill="url(#nl)" mask="url(#nm)"/>
<g filter="url(#bl)">
<path d="M255,98 L352,182" stroke="url(#stA)" stroke-width="5" fill="none"/>
<path d="M455,281 L600,419" stroke="url(#stB)" stroke-width="9" fill="none"/>
<path d="M340,240 L500,392" stroke="url(#stM)" stroke-width="7" fill="none"/>
</g>
</g>
<ellipse cx="571.500" cy="500.500" rx="135" ry="32" transform="rotate(-45 571.500 500.500)" fill="#262626"/>
</g>
</svg>
<!--FLOATPANEL-->
<div class="abs" style="left:9px;top:11px;width:192px;height:192px;background:#595959;border-top:1px solid #3e3e3e"></div>
<div class="abs" style="left:11px;top:25px;width:188px;height:177px;background:#000"></div>
<svg class="abs" style="left:9px;top:11px" width="192" height="192" viewBox="52 90 192 192">
<g fill="#9a9a9a"><rect x="59" y="93" width="2" height="1.4"/><rect x="59" y="95.3" width="2" height="1.4"/><rect x="59" y="97.6" width="2" height="1.4"/><rect x="59" y="99.9" width="2" height="1.4"/></g>
<path d="M64,94.2 L68.4,98.8 M68.4,94.2 L64,98.8" stroke="#f0f0f0" stroke-width="1.100" fill="none"/>
<rect x="77" y="92" width="9" height="9" rx="1" fill="#dcdcdc"/>
<path d="M79.2,93.5 h4.6 v2.3 h1.3 l-3.6,3.4 l-3.6,-3.4 h1.3z" fill="#444"/>
<path d="M81.5,93.2 v4.8 M79.6,96.2 l1.9,2 l1.9,-2" stroke="#fff" stroke-width="1.1" fill="none"/>
<path d="M89.5,95.3 h4 l-2,2.4z" fill="#8a8a8a"/>
<rect x="231.5" y="92" width="6" height="6" fill="#d8d8d8"/><rect x="235" y="95.5" width="5" height="5" fill="#d8d8d8"/>
<path d="M233,93.5 l4.5,4.5" stroke="#555" stroke-width="1.2"/>
<path d="M241.5,275 l-5,5 h5z" fill="#3c3c3c"/>
</svg>
<!--NAVICONS-->
<svg class="abs" style="left:17px;top:525px" width="60" height="20" viewBox="60 604 60 20">
<circle cx="70" cy="614" r="5.6" fill="#111" stroke="#eee" stroke-width="1"/>
<path d="M64.5,614 h11 M70,608.5 v11 M67,609.5 q-2,4.5 0,9 M73,609.5 q2,4.5 0,9" stroke="#eee" stroke-width="0.9" fill="none"/>
<g fill="none" stroke="#e4e4e4" stroke-width="1"><path d="M87,608.5 l2,2 l-2,2 l-2,-2z M87,615.5 l2,2 l-2,2 l-2,-2z M81.500,614 l2,-2 l2,2 l-2,2z M88.500,614 l2,-2 l2,2 l-2,2z"/></g>
<path d="M104.5,608 l2.300,3 h-1.500 v5 h1.500 l-2.300,3 l-2.300,-3 h1.500 v-5 h-1.500z" fill="#111"/>
</svg>
</div>
<!-- vscroll -->
<div class="abs" style="left:709.5px;top:65px;width:12px;height:575px;background:#4a4a4a;"></div>
<div class="abs" style="left:720.3px;top:65px;width:1.5px;height:575px;background:#424242;"></div>
<div class="abs" style="left:710.6px;top:295px;width:9.4px;height:224px;background:#6c6c6c;"></div>
<svg class="abs" style="left:710px;top:69px" width="12" height="10" viewBox="0 0 12 10"><path d="M3,7 l3,-3 l3,3" stroke="#8c8c8c" stroke-width="1.100" fill="none"/></svg>
<!-- toolbar -->
<div class="abs" style="left:0px;top:45px;width:30px;height:595px;background:#535353;"></div>
<div class="abs" style="left:0px;top:45px;width:29.3px;height:8.5px;background:#454545;"></div>
<div class="abs" style="left:7px;top:56.5px;width:15px;height:5.5px;background:#585858;border-radius:1px"></div>
<div class="abs" style="left:29.3px;top:45px;width:0.8px;height:595px;background:#474747;"></div>
<svg class="abs" style="left:0;top:45px" width="30" height="595" viewBox="0 45 30 595">
<path d="M4,46.800 l2,2 l-2,2 M7,46.800 l2,2 l-2,2" stroke="#e8e8e8" stroke-width="1" fill="none"/>
<rect x="3.500" y="66.500" width="23" height="17" rx="1.500" fill="#383838"/>
<!-- move -->
<path d="M15,68.800 l2.500,2.900 h-1.800 v2.600 h2.600 v-1.800 l2.900,2.500 l-2.900,2.500 v-1.800 h-2.600 v2.600 h1.800 l-2.500,2.900 l-2.500,-2.900 h1.800 v-2.600 h-2.600 v1.800 l-2.900,-2.500 l2.900,-2.500 v1.800 h2.600 v-2.600 h-1.800z" fill="#f0f0f0"/>
<!-- corner triangles -->
<g fill="#bdbdbd">
<path d="M24,100 v2.200 h-2.200z M24,119.500 v2.200 h-2.200z M24,139 v2.200 h-2.200z M24,158.500 v2.200 h-2.200z M24,178 v2.200 h-2.200z M24,197.500 v2.200 h-2.200z M24,217 v2.200 h-2.200z M24,236.500 v2.200 h-2.200z M24,256 v2.200 h-2.200z M24,275.500 v2.200 h-2.200z M24,295 v2.200 h-2.200z M24,314.500 v2.200 h-2.200z M24,334 v2.200 h-2.200z M24,373 v2.200 h-2.200z M24,452.500 v2.200 h-2.200z"/>
</g>
<!-- marquee -->
<rect x="9.500" y="89.500" width="11.500" height="10" fill="none" stroke="#e4e4e4" stroke-width="1.300" stroke-dasharray="2.600 1.600"/>
<!-- polygonal lasso -->
<path d="M9,109 l6.500,3.500 l5.500,-4 l-2,9 l-5,-1.500 l-2,2.500 l1.500,-4.500z" fill="none" stroke="#e4e4e4" stroke-width="1.200" stroke-linejoin="round"/>
<path d="M12,119.500 l1.500,-3.500 l2,1" stroke="#e4e4e4" stroke-width="1" fill="none"/>
<!-- magic wand -->
<path d="M9.500,139.300 l8,-8" stroke="#e8e8e8" stroke-width="2.200" stroke-linecap="round"/>
<path d="M16.200,132.600 l1.300,-1.300" stroke="#535353" stroke-width="1"/>
<g stroke="#e8e8e8" stroke-width="0.900"><path d="M15,127.500 v2 M20.500,127.500 l-1.300,1.300 M21.500,132.500 h-2 M21.200,136.300 l-1.300,-1.300 M12.800,128.800 l0.800,0.800"/></g>
<!-- eyedropper -->
<path d="M9,159.500 l1.200,-3 l5.300,-5.300 l1.800,1.800 l-5.300,5.300z" fill="none" stroke="#e8e8e8" stroke-width="1.100"/>
<path d="M15.500,149.500 l4,4 M17,151 l2.500,-2.500 q1.500,-1 2.300,0 q0.800,1 -0.200,2.200 l-2.500,2.500z" fill="#e8e8e8" stroke="#e8e8e8" stroke-width="1"/>
<path d="M7,147.500 a2.200,2.200 0 1 0 3,-0.500 M10.500,146 l-0.500,1.500 l-1.500,-0.300" stroke="#cfcfcf" stroke-width="0.900" fill="none"/>
<!-- brush -->
<path d="M20.800,165.200 l-6,7.300" stroke="#e8e8e8" stroke-width="2.300" stroke-linecap="round"/>
<path d="M14.600,173.200 q0.800,3.800 -5.800,6 q1.800,-1.800 1.700,-3.800 q0.200,-3.200 4.100,-2.200z" fill="#e8e8e8"/>
<path d="M13.300,171.300 l2.600,2.200" stroke="#535353" stroke-width="0.800"/>
<!-- stamp -->
<path d="M15,185.500 a2.600,2.600 0 0 1 2.600,2.600 q0,1.200 -1,2.400 v2 h3.400 q1,0 1,1 v2 h-12 v-2 q0,-1 1,-1 h3.400 v-2 q-1,-1.200 -1,-2.400 a2.600,2.600 0 0 1 2.600,-2.600z" fill="#e8e8e8"/>
<rect x="9" y="196.800" width="12" height="1.500" fill="#e8e8e8"/>
<!-- eraser -->
<path d="M9.500,213.500 l7.500,-7 l4,3.500 l-7.500,7 h-2.500z" fill="none" stroke="#e8e8e8" stroke-width="1.100" stroke-linejoin="round"/>
<path d="M13.500,209.800 l4,3.600 l3.500,-3.400 l-4,-3.500z" fill="#e8e8e8"/>
<path d="M11,218 h10" stroke="#e8e8e8" stroke-width="1"/>
<!-- paint bucket -->
<path d="M11,231.500 l6,-5.500 l5,5.500 l-6,5.500z" fill="none" stroke="#e8e8e8" stroke-width="1.100" stroke-linejoin="round"/>
<path d="M14,228.700 v-3.500 q1.500,-1.500 3,0 v1" fill="none" stroke="#e8e8e8" stroke-width="1"/>
<path d="M22.300,232 q1.500,2.500 0.800,4 q-0.800,1 -1.600,0 q-0.700,-1.500 0.800,-4z" fill="#e8e8e8"/>
<path d="M6,225.500 a2.200,2.200 0 1 0 3,-0.500 M9.500,224 l-0.500,1.500 l-1.500,-0.300" stroke="#cfcfcf" stroke-width="0.900" fill="none"/>
<!-- Type -->
<path d="M9.800,245.500 h10.400 v3 h-1 q-0.200,-1.700 -1.500,-1.700 h-1.700 v8.200 q0,1 1.500,1 v1 h-5 v-1 q1.500,0 1.500,-1 v-8.200 h-1.700 q-1.300,0 -1.500,1.700 h-1z" fill="#ececec"/>
<!-- pen -->
<path d="M10,277 l1,-6 l5.500,-5 l4.500,4.500 l-5,5.500z" fill="none" stroke="#e8e8e8" stroke-width="1.100" stroke-linejoin="round"/>
<path d="M10.300,276.700 l4.700,-4.700" stroke="#e8e8e8" stroke-width="0.900"/><circle cx="15.300" cy="271.700" r="1.100" fill="#e8e8e8"/>
<path d="M16,265.300 l5.500,5.300" stroke="#e8e8e8" stroke-width="1.800"/>
<!-- path select arrow -->
<path d="M12,283.500 v11 l2.600,-2.600 l1.900,4.200 l1.800,-0.800 l-1.900,-4.100 h3.600z" fill="#1a1a1a" stroke="#f0f0f0" stroke-width="1.100" stroke-linejoin="round"/>
<!-- rectangle -->
<rect x="9" y="304" width="12.500" height="10" fill="#7c7c7c" stroke="#e8e8e8" stroke-width="1.100"/>
<!-- hand -->
<path d="M11.500,328 v-4.500 q0,-1 0.900,-1 q0.900,0 0.900,1 v-2 q0,-1 0.900,-1 q0.900,0 0.900,1 v-0.600 q0,-1 0.900,-1 q0.900,0 0.900,1 v1.200 q0,-1 0.900,-1 q0.900,0 0.900,1 v8 q0,4.500 -4,4.500 q-2.500,0 -3.700,-2 l-2.700,-4.500 q-0.500,-1 0.500,-1.300 q0.800,-0.200 1.500,0.700z" fill="#ececec"/>
<!-- zoom -->
<circle cx="13.500" cy="346" r="4.300" fill="none" stroke="#e8e8e8" stroke-width="1.400"/><path d="M16.800,349.300 l4,4.200" stroke="#e8e8e8" stroke-width="1.800" stroke-linecap="round"/>
<!-- dots -->
<g fill="#e8e8e8"><circle cx="10.500" cy="368" r="1.500"/><circle cx="15" cy="368" r="1.500"/><circle cx="19.500" cy="368" r="1.500"/></g>
<!-- default/swap colors -->
<rect x="4" y="382" width="4.800" height="4.800" fill="#111" stroke="#eee" stroke-width="0.900"/><rect x="7" y="385" width="4.500" height="4.500" fill="#eee"/>
<path d="M18.500,383.500 h3 v4.500 M19.800,382 l-1.800,1.500 l1.800,1.500 M20,386.800 l1.500,1.800 l1.500,-1.800" fill="none" stroke="#e8e8e8" stroke-width="1"/>
<!-- fg/bg -->
<rect x="11" y="402" width="13.500" height="13.500" fill="#ffffff" stroke="#2e2e2e" stroke-width="1"/>
<rect x="4.500" y="394.500" width="12.500" height="13" fill="#f765f3" stroke="#f2f2f2" stroke-width="1"/>
<!-- quick mask -->
<rect x="8.500" y="424.500" width="12.500" height="9.500" fill="none" stroke="#e0e0e0" stroke-width="1.100"/><circle cx="14.700" cy="429.300" r="2.700" fill="none" stroke="#e0e0e0" stroke-width="1" stroke-dasharray="1.500 1"/>
<!-- screen mode -->
<rect x="8.500" y="447" width="8" height="6.500" fill="#535353" stroke="#e0e0e0" stroke-width="1.100"/><rect x="12" y="444" width="9" height="6.500" fill="#535353" stroke="#e0e0e0" stroke-width="1.100"/>
</svg>

<!-- dock -->
<div class="abs" style="left:721px;top:45px;width:239px;height:595px;background:#454545;"></div>
<div class="abs" style="left:721px;top:45px;width:239px;height:8.5px;background:#3e3e3e;"></div>
<div class="abs" style="left:724px;top:53.5px;width:27.5px;height:586.5px;background:#4d4d4d;"></div>
<div class="abs" style="left:724px;top:53.5px;width:27.5px;height:226px;background:#535353;"></div>
<div class="abs" style="left:724px;top:82.5px;width:27.5px;height:2px;background:#414141;"></div>
<div class="abs" style="left:724px;top:135px;width:27.5px;height:2px;background:#414141;"></div>
<div class="abs" style="left:724px;top:166px;width:27.5px;height:2px;background:#414141;"></div>
<div class="abs" style="left:724px;top:217.5px;width:27.5px;height:2px;background:#414141;"></div>
<div class="abs" style="left:724px;top:249px;width:27.5px;height:2px;background:#414141;"></div>
<div class="abs" style="left:724px;top:279px;width:27.5px;height:2px;background:#414141;"></div>
<div class="abs" style="left:733px;top:57px;width:10px;height:1.5px;background:#5e5e5e;"></div>
<div class="abs" style="left:733px;top:88px;width:10px;height:1.5px;background:#5e5e5e;"></div>
<div class="abs" style="left:733px;top:140px;width:10px;height:1.5px;background:#5e5e5e;"></div>
<div class="abs" style="left:733px;top:171px;width:10px;height:1.5px;background:#5e5e5e;"></div>
<div class="abs" style="left:733px;top:222.5px;width:10px;height:1.5px;background:#5e5e5e;"></div>
<div class="abs" style="left:733px;top:253.5px;width:10px;height:1.5px;background:#5e5e5e;"></div>
<div class="abs" style="left:754px;top:53.5px;width:206px;height:20px;background:#424242;"></div>
<div class="abs" style="left:754px;top:53.5px;width:49.5px;height:20px;background:#535353;"></div>
<div class="abs" style="left:754px;top:73.5px;width:206px;height:321px;background:#535353;"></div>
<div class="abs" style="left:754px;top:98.5px;width:206px;height:1.2px;background:#464646;"></div>
<div class="abs" style="left:754px;top:144.8px;width:194px;height:1.2px;background:#474747;"></div>
<div class="abs" style="left:754px;top:375.8px;width:206px;height:1.2px;background:#474747;"></div>
<div class="abs" style="left:762px;top:79.3px;width:15.8px;height:15.2px;background:#383838;border-radius:1px"></div>
<div class="abs" style="left:810px;top:106.5px;width:20px;height:12.5px;background:#d2d2d2;border:1px solid #e6e6e6"></div>
<div class="abs" style="left:810px;top:121.5px;width:20px;height:12.5px;background:#d2d2d2;border:1px solid #e6e6e6"></div>
<div class="abs" style="left:937.8px;top:102.5px;width:8px;height:35px;background:#3e3e3e;"></div>
<div class="abs" style="left:948.5px;top:100px;width:11.5px;height:276px;background:#4b4b4b;"></div>
<div class="abs" style="left:950.5px;top:113.5px;width:8px;height:229px;background:#696969;"></div>
<div class="abs" style="left:754px;top:394.5px;width:206px;height:3.5px;background:#3e3e3e;"></div>
<div class="abs" style="left:754px;top:398px;width:206px;height:19.5px;background:#424242;"></div>
<div class="abs" style="left:777px;top:398px;width:81px;height:19.5px;background:#4a4a4a;"></div>
<div class="abs" style="left:812.3px;top:398px;width:1px;height:19.5px;background:#404040;"></div>
<div class="abs" style="left:857.5px;top:398px;width:1px;height:19.5px;background:#404040;"></div>
<div class="abs" style="left:754px;top:398px;width:23px;height:19.5px;background:#535353;"></div>
<div class="abs" style="left:754px;top:417.5px;width:206px;height:222.5px;background:#535353;"></div>
<div class="abs" style="left:754px;top:444.5px;width:195px;height:120px;background:#555555;"></div>
<div class="abs" style="left:754px;top:564.5px;width:195px;height:75.5px;background:#4d4d4d;"></div>
<div class="abs" style="left:949px;top:444.5px;width:11px;height:195.5px;background:#4a4a4a;"></div>
<div class="abs" style="left:822px;top:425px;width:16px;height:16px;background:#353535;border-radius:1px"></div>
<div class="abs" style="left:754px;top:444.5px;width:195px;height:0.9px;background:#494949;"></div>
<div class="abs" style="left:754px;top:459.5px;width:195px;height:0.9px;background:#494949;"></div>
<div class="abs" style="left:754px;top:474.5px;width:195px;height:0.9px;background:#494949;"></div>
<div class="abs" style="left:754px;top:489.5px;width:195px;height:0.9px;background:#494949;"></div>
<div class="abs" style="left:754px;top:504.5px;width:195px;height:0.9px;background:#494949;"></div>
<div class="abs" style="left:754px;top:519.5px;width:195px;height:0.9px;background:#494949;"></div>
<div class="abs" style="left:754px;top:534.5px;width:195px;height:0.9px;background:#494949;"></div>
<div class="abs" style="left:754px;top:549.5px;width:195px;height:0.9px;background:#494949;"></div>
<div class="abs" style="left:754px;top:564.5px;width:195px;height:0.9px;background:#494949;"></div>
<div class="abs" style="left:768px;top:444.5px;width:0.9px;height:120px;background:#494949;"></div>
<div class="abs" style="left:806px;top:520.5px;width:142.8px;height:13px;background:#6b6b6b;"></div>
<svg class="abs" style="left:721px;top:45px" width="239" height="595" viewBox="721 45 239 595">
<path d="M746.500,46.800 l-2,2 l2,2 M743.500,46.800 l-2,2 l2,2" stroke="#dcdcdc" stroke-width="1" fill="none"/>
<path d="M950,46.800 l2,2 l-2,2 M953,46.800 l2,2 l-2,2" stroke="#dcdcdc" stroke-width="1" fill="none"/>
<!-- history -->
<g fill="none" stroke="#e6e6e6" stroke-width="1.100"><rect x="732.600" y="64.200" width="2.800" height="2.800"/><rect x="732.600" y="68.600" width="2.800" height="2.800"/></g><rect x="732" y="72.800" width="4" height="3.800" fill="#e6e6e6"/>
<path d="M739.500,76.300 q4.800,-1.800 4.600,-6 q-0.300,-3 -3,-3.600" fill="none" stroke="#e6e6e6" stroke-width="1.700"/><path d="M742,63.500 l-4,3 l4,3z" fill="#e6e6e6"/>
<!-- brush settings -->
<g fill="#e6e6e6"><rect x="729.500" y="96" width="1.800" height="1.800"/><rect x="732.300" y="96" width="3.200" height="1.800"/><rect x="729.500" y="99.200" width="1.800" height="1.800"/><rect x="732.300" y="99.200" width="3.200" height="1.800"/><rect x="729.500" y="102.400" width="1.800" height="1.800"/><rect x="732.300" y="102.400" width="3.200" height="1.800"/></g>
<path d="M745.300,96.300 l-5.300,5.800" stroke="#e6e6e6" stroke-width="2.500" stroke-linecap="round"/><path d="M740,102.800 q1,3.800 -6,6.200 q1.800,-2 1.800,-4 q0.200,-3.200 4.200,-2.200z" fill="#e6e6e6"/>
<!-- brushes -->
<path d="M729.500,118.500 q2.500,-3 6,0 q-3.500,3 -6,0z" fill="#e6e6e6"/><path d="M735,118.500 h10.500" stroke="#e6e6e6" stroke-width="1.800"/>
<path d="M731,125.800 h9" stroke="#e6e6e6" stroke-width="1.800"/><path d="M739.500,125.800 q3,-4 6,-3.500 v7 q-3,0.500 -6,-3.500z" fill="#e6e6e6"/>
<!-- clone source -->
<g fill="#e6e6e6"><rect x="729.500" y="146.500" width="1.800" height="1.800"/><rect x="732.300" y="146.500" width="3.200" height="1.800"/><rect x="729.500" y="149.700" width="1.800" height="1.800"/><rect x="732.300" y="149.700" width="3.200" height="1.800"/>
<path d="M740.500,146.800 a2.600,2.600 0 0 1 2.600,2.600 q0,1.100 -0.900,2.200 v1.600 h2.800 q1,0 1,1 v2 h-11 v-2 q0,-1 1,-1 h2.800 v-1.600 q-0.900,-1.100 -0.900,-2.200 a2.600,2.600 0 0 1 2.600,-2.600z"/><rect x="735" y="157.200" width="11" height="1.500"/></g>
<!-- character -->
<path d="M732.500,188 l3.700,-9.500 h0.600 l3.700,9.500 M733.800,184.800 h5.400" fill="none" stroke="#e8e8e8" stroke-width="1.200"/><path d="M742.800,177.500 v11.500" stroke="#e8e8e8" stroke-width="1"/>
<!-- paragraph -->
<path d="M741.500,199.500 h-4.500 a3,3 0 0 0 0,6 h1 v4.500 M740.500,199.500 v10.500" fill="none" stroke="#e8e8e8" stroke-width="1.200"/><path d="M737,200 a2.500,2.500 0 0 0 0,5 h1.500 v-5z" fill="#e8e8e8"/>
<!-- tool presets -->
<path d="M731.500,241.500 l8,-8" stroke="#e8e8e8" stroke-width="2.200" stroke-linecap="round"/><path d="M731,230.500 a2.500,2.500 0 0 0 3,3 M734,233.500 l1.500,1.500" stroke="#e8e8e8" stroke-width="1.500" fill="none"/>
<path d="M744.500,230 l-7,7" stroke="#e8e8e8" stroke-width="1.300"/><circle cx="743" cy="240" r="1.800" fill="none" stroke="#e8e8e8" stroke-width="1"/><path d="M738.500,236.500 l3,2.500" stroke="#e8e8e8" stroke-width="1.200"/>
<!-- libraries -->
<path d="M733.500,260.500 h9 v10.500 h-9z" fill="none" stroke="#d8d8d8" stroke-width="1.100"/><path d="M731.800,262 v10.500 h9" fill="none" stroke="#d8d8d8" stroke-width="1"/><rect x="737.500" y="261" width="4.500" height="6" fill="#e0e0e0"/>
<!-- properties menu -->
<g fill="#868686"><rect x="949.800" y="60.400" width="7.400" height="1.700"/><rect x="949.800" y="62.800" width="7.400" height="1.700"/><rect x="949.800" y="65.200" width="7.400" height="1.700"/></g>
<g fill="#868686"><rect x="949.800" y="404.700" width="7.400" height="1.700"/><rect x="949.800" y="407.100" width="7.400" height="1.700"/><rect x="949.800" y="409.500" width="7.400" height="1.700"/></g>
<!-- materials icon -->
<path d="M766.500,84 v6 q2,1.300 4,0 v-6 q-2,1.100 -4,0z M766.500,84 l-0.700,-1 M770.500,84 l0.700,-1" fill="none" stroke="#dcdcdc" stroke-width="1"/><path d="M771.500,85.500 h2.300 l1.200,1.500 l-1.200,1.500 h-2.300z" fill="#dcdcdc"/>
<!-- base color texture icon -->
<path d="M836.300,108 h5.700 l3,3 v6.300 h-8.700z" fill="#e2e2e2"/><path d="M837.300,116.300 l2.200,-4.300 l1.600,2.600 l1,-1.400 l1.900,3.100z" fill="#4a4a4a"/><path d="M837.800,109.500 h2.500 v2 h-2.500z" fill="#4a4a4a"/><path d="M843.500,116.800 h3.300" stroke="#e2e2e2" stroke-width="1.200"/>
<!-- preview -->
<defs><pattern id="chk" x="900.300" y="101.500" width="12.400" height="12.400" patternUnits="userSpaceOnUse"><rect width="12.400" height="12.400" fill="#7c7c7c"/><rect width="6.200" height="6.200" fill="#9e9e9e"/><rect x="6.200" y="6.200" width="6.200" height="6.200" fill="#9e9e9e"/></pattern>
<radialGradient id="sph" cx="0.350" cy="0.300" r="0.800"><stop offset="0" stop-color="#ececec"/><stop offset="0.600" stop-color="#cfcfcf"/><stop offset="1" stop-color="#a2a2a2"/></radialGradient></defs>
<rect x="900.300" y="101.500" width="37" height="37.300" fill="url(#chk)"/>
<ellipse cx="919" cy="120" rx="16.500" ry="17.500" transform="rotate(35 919 120)" fill="url(#sph)"/>
<path d="M906,131.500 q10,8 22,-2 q5,-6 2,-14" fill="none" stroke="#555" stroke-width="0.800" stroke-dasharray="2 1"/>
<path d="M918,128 l8,-6.500" stroke="#fff" stroke-width="1.500" stroke-linecap="round" opacity="0.800"/>
<path d="M939.500,119.500 l2.300,2.300 l2.300,-2.300" stroke="#c8c8c8" stroke-width="1" fill="none"/>
<!-- scroll arrows -->
<path d="M952,109.500 l2.800,-2.800 l2.800,2.800" stroke="#a8a8a8" stroke-width="1" fill="none"/>
<path d="M952,367 l2.800,2.800 l2.800,-2.800" stroke="#8a8a8a" stroke-width="1" fill="none"/>
<!-- bottom icons -->
<rect x="908.500" y="381.500" width="9" height="9" rx="1" fill="none" stroke="#dcdcdc" stroke-width="1.100"/><circle cx="913" cy="386.200" r="2.300" fill="none" stroke="#dcdcdc" stroke-width="1"/><rect x="912.300" y="386" width="1.400" height="2.800" fill="#dcdcdc"/>
<g fill="#6c6c6c"><rect x="931.300" y="382.800" width="8" height="1.300"/><rect x="933.600" y="381.300" width="3.400" height="1.600"/><path d="M932.200,384.800 h6.200 l-0.500,6.500 h-5.200z"/></g><path d="M934.300,385.800 v4.200 M936.300,385.800 v4.200" stroke="#535353" stroke-width="0.800"/>
<!-- 3D filter icons -->
<g fill="none" stroke="#e8e8e8" stroke-width="1.200"><path d="M825.500,428.500 h9.500 M827.500,428.500 v8.500 h7.500 M827.500,432.800 h7.500"/></g><g fill="#e8e8e8"><rect x="829.500" y="427.300" width="3" height="2.400"/><rect x="831.500" y="431.600" width="3" height="2.400"/><rect x="829.500" y="435.800" width="3" height="2.400"/></g>
<path d="M845,429 v8 q3.500,2 7,0 v-8" fill="#cfcfcf"/><ellipse cx="848.500" cy="429" rx="3.500" ry="1.300" fill="#e8e8e8" stroke="#bbb" stroke-width="0.500"/>
<path d="M863.500,429.500 v7.500 q2.500,1.500 5,0 v-7.500 q-2.500,1.300 -5,0z M863.500,429.500 l-0.800,-1 M868.500,429.500 l0.800,-1" fill="none" stroke="#d8d8d8" stroke-width="1"/><path d="M869.500,431.500 h2.500 v4 h-2.500z" fill="#d8d8d8"/>
<path d="M885,427 a3.600,3.600 0 0 1 2,6.600 v1.400 h-4 v-1.400 a3.600,3.600 0 0 1 2,-6.600z" fill="#e8e8e8"/><rect x="883.500" y="436" width="3" height="1.300" fill="#e8e8e8"/><rect x="884" y="438" width="2" height="1" fill="#e8e8e8"/>
<path d="M756.800,451.8 q5.200,-5.800 10.400,0 q-5.200,5.800 -10.400,0z" fill="#a2a2a2"/><circle cx="762" cy="451.8" r="2.100" fill="#4a4a4a"/><circle cx="762" cy="451.8" r="0.900" fill="#a2a2a2"/>
<path d="M756.800,466.8 q5.200,-5.800 10.400,0 q-5.200,5.800 -10.400,0z" fill="#a2a2a2"/><circle cx="762" cy="466.8" r="2.100" fill="#4a4a4a"/><circle cx="762" cy="466.8" r="0.900" fill="#a2a2a2"/>
<path d="M756.800,481.8 q5.200,-5.800 10.400,0 q-5.200,5.800 -10.400,0z" fill="#a2a2a2"/><circle cx="762" cy="481.8" r="2.100" fill="#4a4a4a"/><circle cx="762" cy="481.8" r="0.900" fill="#a2a2a2"/>
<path d="M756.800,496.8 q5.200,-5.800 10.400,0 q-5.200,5.800 -10.400,0z" fill="#f2f2f2"/><circle cx="762" cy="496.8" r="2.100" fill="#4a4a4a"/><circle cx="762" cy="496.8" r="0.900" fill="#f2f2f2"/>
<path d="M756.800,511.8 q5.200,-5.800 10.400,0 q-5.200,5.800 -10.400,0z" fill="#f2f2f2"/><circle cx="762" cy="511.8" r="2.100" fill="#4a4a4a"/><circle cx="762" cy="511.8" r="0.900" fill="#f2f2f2"/>
<path d="M756.800,526.8 q5.200,-5.800 10.400,0 q-5.200,5.800 -10.400,0z" fill="#f2f2f2"/><circle cx="762" cy="526.8" r="2.100" fill="#4a4a4a"/><circle cx="762" cy="526.8" r="0.900" fill="#f2f2f2"/>
<path d="M756.800,541.8 q5.200,-5.800 10.400,0 q-5.200,5.800 -10.400,0z" fill="#f2f2f2"/><circle cx="762" cy="541.8" r="2.100" fill="#4a4a4a"/><circle cx="762" cy="541.8" r="0.900" fill="#f2f2f2"/>
<path d="M756.800,556.8 q5.200,-5.800 10.400,0 q-5.200,5.800 -10.400,0z" fill="#f2f2f2"/><circle cx="762" cy="556.8" r="2.100" fill="#4a4a4a"/><circle cx="762" cy="556.8" r="0.900" fill="#f2f2f2"/>
<g stroke="#e0e0e0" stroke-width="1" fill="none"><path d="M776,446.500 v1.500 M773,447.500 l0.800,1.200 M779,447.500 l-0.800,1.200"/><circle cx="776" cy="450.500" r="1.500" fill="#e0e0e0"/><path d="M771.500,454 l4.500,-2 l4.500,2 l-4.500,2.200z"/></g>
<g fill="none" stroke="#e4e4e4" stroke-width="1.100"><path d="M771.500,463 h9 M773.500,463 v8 h7 M773.500,467 h7"/></g><g fill="#e4e4e4"><rect x="775.500" y="461.800" width="3" height="2.400"/><rect x="777" y="465.800" width="3" height="2.400"/><rect x="775.500" y="469.800" width="3" height="2.400"/></g>
<rect x="783.500" y="478.500" width="7.500" height="6.500" rx="0.800" fill="#ececec"/><path d="M791.500,481.800 l3,-2.500 v5z" fill="#ececec"/>
<path d="M774.500,495.300 l2.600,2.600 l2.600,-2.600" stroke="#c4c4c4" stroke-width="1" fill="none"/>
<path d="M785,493.500 v7 q3,1.800 6,0 v-7" fill="#cfcfcf"/><ellipse cx="788" cy="493.500" rx="3" ry="1.200" fill="#ececec" stroke="#aaa" stroke-width="0.500"/>
<path d="M797.500,508.3 v7 q2.200,1.300 4.400,0 v-7 q-2.200,1.200 -4.400,0z M797.500,508.3 l-0.800,-1 M801.900,508.3 l0.800,-1" fill="none" stroke="#d8d8d8" stroke-width="1"/><path d="M802.800,510.3 h2.200 v3.500 h-2.200z" fill="#d8d8d8"/>
<path d="M797.500,523.3 v7 q2.200,1.300 4.400,0 v-7 q-2.200,1.200 -4.400,0z M797.500,523.3 l-0.800,-1 M801.900,523.3 l0.800,-1" fill="none" stroke="#d8d8d8" stroke-width="1"/><path d="M802.800,525.3 h2.200 v3.500 h-2.200z" fill="#d8d8d8"/>
<path d="M797.500,538.3 v7 q2.200,1.300 4.400,0 v-7 q-2.200,1.200 -4.400,0z M797.500,538.3 l-0.800,-1 M801.900,538.3 l0.800,-1" fill="none" stroke="#d8d8d8" stroke-width="1"/><path d="M802.800,540.3 h2.200 v3.500 h-2.200z" fill="#d8d8d8"/>
<circle cx="788" cy="557" r="2" fill="#ececec"/><g stroke="#ececec" stroke-width="1"><path d="M788,552.500 v1.500 M788,560 v1.500 M783.500,557 h1.500 M791,557 h1.500 M784.800,553.800 l1,1 M790.200,559.200 l1,1 M791.200,553.800 l-1,1 M785.800,559.200 l-1,1"/></g>
</svg>
<div class="t" style="left:760.6px;top:59px;font-size:9.2px;color:#f2f2f2;font-weight:bold;transform:scaleX(0.789);">Properties</div>
<div class="t" style="left:783px;top:85px;font-size:8.8px;color:#e0e0e0;transform:scaleX(0.798);">Materials</div>
<div class="t" style="left:766.3px;top:110px;font-size:8.8px;color:#dcdcdc;transform:scaleX(0.813);">Base Color:</div>
<div class="t" style="left:757.5px;top:124px;font-size:8.8px;color:#dcdcdc;transform:scaleX(0.867);">Interior Color:</div>
<div class="abs" style="left:891.5px;top:154.95px;width:35px;height:12.3px;background:#454545;border:1px solid #5e5e5e"></div>
<div class="t" style="left:757.5px;top:157px;font-size:8.8px;color:#dcdcdc;transform:scaleX(0.805);">Glow:</div>
<div class="t" style="left:895px;top:158px;font-size:8.6px;color:#f0f0f0;transform:scaleX(0.845);">11%</div>
<div class="abs" style="left:891.5px;top:183px;width:35px;height:12.3px;background:#454545;border:1px solid #5e5e5e"></div>
<div class="t" style="left:757.5px;top:185px;font-size:8.8px;color:#dcdcdc;transform:scaleX(0.821);">Metallic:</div>
<div class="t" style="left:895px;top:186px;font-size:8.6px;color:#f0f0f0;transform:scaleX(0.885);">0%</div>
<div class="abs" style="left:891.5px;top:210.7px;width:35px;height:12.3px;background:#454545;border:1px solid #5e5e5e"></div>
<div class="t" style="left:757.5px;top:213px;font-size:8.8px;color:#dcdcdc;transform:scaleX(0.845);">Roughness:</div>
<div class="t" style="left:895px;top:213px;font-size:8.6px;color:#f0f0f0;transform:scaleX(0.813);">23%</div>
<div class="abs" style="left:891.5px;top:238.2px;width:35px;height:12.3px;background:#454545;border:1px solid #5e5e5e"></div>
<div class="t" style="left:757.5px;top:241px;font-size:8.8px;color:#dcdcdc;transform:scaleX(0.861);">Height:</div>
<div class="t" style="left:895px;top:241px;font-size:8.6px;color:#f0f0f0;transform:scaleX(0.813);">10%</div>
<div class="abs" style="left:891.5px;top:266.2px;width:35px;height:12.3px;background:#454545;border:1px solid #5e5e5e"></div>
<div class="t" style="left:757.5px;top:269px;font-size:8.8px;color:#dcdcdc;transform:scaleX(0.821);">Opacity:</div>
<div class="t" style="left:895px;top:269px;font-size:8.6px;color:#f0f0f0;transform:scaleX(0.818);">100%</div>
<div class="abs" style="left:891.5px;top:294px;width:35px;height:12.3px;background:#454545;border:1px solid #5e5e5e"></div>
<div class="t" style="left:757.5px;top:296px;font-size:8.8px;color:#dcdcdc;transform:scaleX(0.822);">Refraction:</div>
<div class="t" style="left:895px;top:297px;font-size:8.6px;color:#f0f0f0;transform:scaleX(0.790);">1.000</div>
<div class="abs" style="left:891.5px;top:322px;width:35px;height:12.3px;background:#454545;border:1px solid #5e5e5e"></div>
<div class="t" style="left:757.5px;top:324px;font-size:8.8px;color:#dcdcdc;transform:scaleX(0.856);">Density:</div>
<div class="t" style="left:895px;top:325px;font-size:8.6px;color:#f0f0f0;transform:scaleX(0.885);">0%</div>
<div class="abs" style="left:891.5px;top:349.7px;width:35px;height:12.3px;background:#454545;border:1px solid #5e5e5e"></div>
<div class="t" style="left:757.5px;top:352px;font-size:8.8px;color:#dcdcdc;transform:scaleX(0.864);">Translucence:</div>
<div class="t" style="left:895px;top:352px;font-size:8.6px;color:#f0f0f0;transform:scaleX(0.885);">0%</div>
<svg class="abs" style="left:754px;top:150px" width="206" height="240" viewBox="754 150 206 240"><rect x="762" y="171.85" width="171" height="2" fill="#747474"/><path d="M780.3,171.05 l4.300,4.200 v2.200 q0,1.300 -1.300,1.300 h-6 q-1.300,0 -1.300,-1.300 v-2.200z" fill="#f6f6f6" stroke="#3a3a3a" stroke-width="0.700"/><path d="M933,157.75 h3.800 l1.200,1.500 h4.600 v6.500 h-9.600z" fill="#dedede"/><path d="M940.500,164.95 l2.500,2.300" stroke="#dedede" stroke-width="1.200"/><rect x="762" y="199.9" width="171" height="2" fill="#747474"/><path d="M761.5,199.1 l4.300,4.200 v2.200 q0,1.300 -1.300,1.300 h-6 q-1.300,0 -1.300,-1.300 v-2.200z" fill="#f6f6f6" stroke="#3a3a3a" stroke-width="0.700"/><path d="M933,185.8 h3.800 l1.200,1.500 h4.600 v6.500 h-9.600z" fill="#dedede"/><path d="M940.500,193 l2.500,2.300" stroke="#dedede" stroke-width="1.200"/><rect x="762" y="227.6" width="171" height="2" fill="#747474"/><path d="M835.6,226.8 l4.300,4.200 v2.200 q0,1.300 -1.300,1.300 h-6 q-1.300,0 -1.300,-1.300 v-2.200z" fill="#f6f6f6" stroke="#3a3a3a" stroke-width="0.700"/><path d="M933,213.5 h3.800 l1.200,1.500 h4.600 v6.500 h-9.600z" fill="#dedede"/><path d="M940.500,220.7 l2.500,2.300" stroke="#dedede" stroke-width="1.200"/><rect x="762" y="255.1" width="171" height="2" fill="#747474"/><path d="M778.75,254.3 l4.300,4.200 v2.200 q0,1.300 -1.300,1.300 h-6 q-1.300,0 -1.300,-1.300 v-2.200z" fill="#f6f6f6" stroke="#3a3a3a" stroke-width="0.700"/><path d="M933,241 h3.800 l1.200,1.500 h4.600 v6.500 h-9.600z" fill="#dedede"/><path d="M940.500,248.2 l2.500,2.300" stroke="#dedede" stroke-width="1.200"/><rect x="762" y="283.1" width="171" height="2" fill="#747474"/><path d="M932.5,282.3 l4.300,4.200 v2.200 q0,1.300 -1.300,1.300 h-6 q-1.300,0 -1.300,-1.300 v-2.200z" fill="#f6f6f6" stroke="#3a3a3a" stroke-width="0.700"/><path d="M933,269 h3.800 l1.200,1.500 h4.600 v6.500 h-9.600z" fill="#dedede"/><path d="M940.500,276.2 l2.500,2.300" stroke="#dedede" stroke-width="1.200"/><rect x="762" y="310.9" width="171" height="2" fill="#747474"/><path d="M761.5,310.1 l4.300,4.200 v2.200 q0,1.300 -1.300,1.300 h-6 q-1.300,0 -1.300,-1.300 v-2.200z" fill="#f6f6f6" stroke="#3a3a3a" stroke-width="0.700"/><rect x="762" y="338.9" width="171" height="2" fill="#747474"/><path d="M761.5,338.1 l4.300,4.200 v2.200 q0,1.300 -1.300,1.300 h-6 q-1.300,0 -1.300,-1.300 v-2.200z" fill="#f6f6f6" stroke="#3a3a3a" stroke-width="0.700"/><rect x="762" y="366.6" width="171" height="2" fill="#747474"/><path d="M761.5,365.8 l4.300,4.200 v2.200 q0,1.300 -1.300,1.300 h-6 q-1.300,0 -1.300,-1.300 v-2.200z" fill="#f6f6f6" stroke="#3a3a3a" stroke-width="0.700"/><path d="M933,352.5 h3.800 l1.200,1.500 h4.600 v6.500 h-9.600z" fill="#dedede"/><path d="M940.500,359.7 l2.500,2.300" stroke="#dedede" stroke-width="1.200"/></svg>
<div class="t" style="left:760px;top:404px;font-size:9.2px;color:#f2f2f2;font-weight:bold;transform:scaleX(0.850);">3D</div>
<div class="t" style="left:784px;top:404px;font-size:9px;color:#c2c2c2;font-weight:bold;transform:scaleX(0.793);">Layers</div>
<div class="t" style="left:820.6px;top:404px;font-size:9px;color:#c2c2c2;font-weight:bold;transform:scaleX(0.775);">Channels</div>
<div class="t" style="left:787.5px;top:448px;font-size:8.8px;color:#e6e6e6;transform:scaleX(0.858);">Environment</div>
<div class="t" style="left:787.5px;top:463px;font-size:8.8px;color:#e6e6e6;transform:scaleX(0.822);">Scene</div>
<div class="t" style="left:799.5px;top:478px;font-size:8.8px;color:#e6e6e6;transform:scaleX(0.850);">Current View</div>
<div class="t" style="left:799.5px;top:493px;font-size:8.8px;color:#e6e6e6;transform:scaleX(0.821);">Cylinder</div>
<div class="t" style="left:811px;top:508px;font-size:8.8px;color:#e6e6e6;transform:scaleX(0.832);">Cylinder_Material</div>
<div class="t" style="left:811px;top:523px;font-size:8.8px;color:#e6e6e6;transform:scaleX(0.851);">Top_Material</div>
<div class="t" style="left:811px;top:538px;font-size:8.8px;color:#e6e6e6;transform:scaleX(0.821);">Bottom_Material</div>
<div class="t" style="left:799.5px;top:553px;font-size:8.8px;color:#e6e6e6;transform:scaleX(0.876);">Infinite Light 1</div>
</div>
</body></html>
